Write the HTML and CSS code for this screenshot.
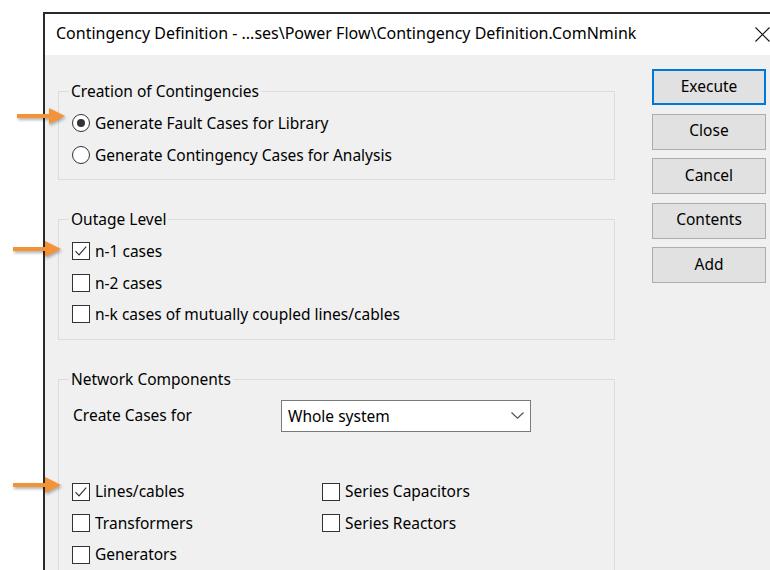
FILE: index.html
```html
<!DOCTYPE html>
<html>
<head>
<meta charset="utf-8">
<title>Contingency Definition</title>
<link rel="stylesheet" href="styles.css">
</head>
<body>
<div class="window">
  <div class="titlebar">
    <span class="title">Contingency Definition - ...ses\Power Flow\Contingency Definition.ComNmink</span>
    <span class="close">
      <svg width="15" height="15" viewBox="0 0 15 15"><path d="M0.5 0.5L14.5 14.5M14.5 0.5L0.5 14.5" stroke="#111" stroke-width="1.1" fill="none"/></svg>
    </span>
  </div>
  <div class="content">
    <div class="main">
      <fieldset class="group g1">
        <legend>Creation of Contingencies</legend>
        <div class="row"><span class="radio on"></span><span>Generate Fault Cases for Library</span></div>
        <div class="row"><span class="radio"></span><span>Generate Contingency Cases for Analysis</span></div>
      </fieldset>

      <fieldset class="group g2">
        <legend>Outage Level</legend>
        <div class="row"><span class="check on"><svg width="16" height="16" viewBox="0 0 16 16"><path d="M2.5 8.2L6 11.8L13.2 3.6" stroke="#333" stroke-width="1.2" fill="none"/></svg></span><span>n-1 cases</span></div>
        <div class="row"><span class="check"></span><span>n-2 cases</span></div>
        <div class="row short"><span class="check"></span><span>n-k cases of mutually coupled lines/cables</span></div>
      </fieldset>

      <fieldset class="group g3">
        <legend>Network Components</legend>
        <div class="create">
          <span class="create-label">Create Cases for</span>
          <div class="select">
            <span>Whole system</span>
            <svg width="13" height="7" viewBox="0 0 13 7"><path d="M0.5 0.5L6.5 6.2L12.5 0.5" stroke="#555" stroke-width="1.2" fill="none"/></svg>
          </div>
        </div>
        <div class="comp-grid">
          <div class="row tight"><span class="check on"><svg width="16" height="16" viewBox="0 0 16 16"><path d="M2.5 8.2L6 11.8L13.2 3.6" stroke="#333" stroke-width="1.2" fill="none"/></svg></span><span>Lines/cables</span></div>
          <div class="row tight"><span class="check"></span><span>Series Capacitors</span></div>
          <div class="row tight"><span class="check"></span><span>Transformers</span></div>
          <div class="row tight"><span class="check"></span><span>Series Reactors</span></div>
          <div class="row tight"><span class="check"></span><span>Generators</span></div>
        </div>
      </fieldset>
    </div>

    <div class="buttons">
      <button class="btn default">Execute</button>
      <button class="btn">Close</button>
      <button class="btn">Cancel</button>
      <button class="btn">Contents</button>
      <button class="btn">Add</button>
    </div>
  </div>
</div>

<!-- callout arrows -->
<svg class="arrow a1" width="48" height="16" viewBox="0 0 48 16"><rect x="0" y="6" width="34" height="4" fill="#f39237"/><polygon points="32,0 48,8 32,16" fill="#f39237"/></svg>
<svg class="arrow a2" width="48" height="16" viewBox="0 0 48 16"><rect x="0" y="6" width="34" height="4" fill="#f39237"/><polygon points="32,0 48,8 32,16" fill="#f39237"/></svg>
<svg class="arrow a3" width="48" height="16" viewBox="0 0 48 16"><rect x="0" y="6" width="34" height="4" fill="#f39237"/><polygon points="32,0 48,8 32,16" fill="#f39237"/></svg>
</body>
</html>
```

FILE: styles.css
```css
html, body {
  margin: 0;
  padding: 0;
}

body {
  position: relative;
  width: 770px;
  height: 570px;
  overflow: hidden;
  background: #fff;
  font-family: "Segoe UI", "Noto Sans", sans-serif;
  color: #000;
}

.window {
  margin: 12px 0 0 43px;
  width: 747px;
  height: 620px;
  border-top: 2px solid #2a2a2a;
  border-left: 2px solid #2a2a2a;
  background: #f0f0f0;
}

.titlebar {
  box-sizing: border-box;
  height: 41px;
  background: #fff;
  display: flex;
  align-items: center;
  padding: 0 0 3px 11px;
}

.title {
  flex: 1;
  font-size: 16px;
  white-space: nowrap;
}

.close {
  width: 60px;
  display: flex;
  justify-content: center;
  align-items: center;
  padding-top: 2px;
}

.content {
  display: flex;
  align-items: flex-start;
  padding: 14px 0 0 13px;
}

.main {
  width: 557px;
}

.group {
  margin: 0;
  padding: 0 0 0 13px;
  border: 1px solid #dcdcdc;
  min-width: 0;
}

.group legend {
  margin-left: -3px;
  padding: 0 2px;
  font-size: 15.5px;
  line-height: 18px;
}

.g1 {
  margin-top: 13px;
  padding-top: 7px;
  padding-bottom: 8px;
}

.g2 {
  margin-top: 30px;
  padding-top: 7px;
  padding-bottom: 10px;
}

.g3 {
  margin-top: 30px;
  padding-top: 12px;
  padding-bottom: 40px;
}

.row {
  display: flex;
  align-items: center;
  gap: 5px;
  height: 32px;
  font-size: 15.5px;
  white-space: nowrap;
}

.row > span:last-child {
  padding-bottom: 1px;
}

.row.short {
  height: 30px;
}

.row.tight {
  height: 31.5px;
}

.radio {
  box-sizing: border-box;
  width: 18px;
  height: 18px;
  border: 1px solid #333;
  border-radius: 50%;
  background: #fff;
  display: flex;
  align-items: center;
  justify-content: center;
}

.radio.on::after {
  content: "";
  width: 8px;
  height: 8px;
  border-radius: 50%;
  background: #333;
}

.check {
  box-sizing: border-box;
  width: 18px;
  height: 18px;
  border: 1px solid #333;
  background: #fff;
  display: flex;
  align-items: center;
  justify-content: center;
}

.create {
  display: grid;
  grid-template-columns: 209px 250px;
  align-items: center;
  height: 32px;
}

.create-label {
  padding: 0 0 3px 1px;
  font-size: 15.5px;
}

.select {
  box-sizing: border-box;
  height: 32px;
  border: 1px solid #7a7a7a;
  background: #fff;
  display: flex;
  align-items: center;
  justify-content: space-between;
  padding: 0 6px 1px 6px;
  font-size: 15.5px;
}

.comp-grid {
  margin-top: 44px;
  display: grid;
  grid-template-columns: 250px 250px;
}

.buttons {
  margin-left: 37px;
  display: flex;
  flex-direction: column;
  gap: 8.5px;
}

.btn {
  box-sizing: border-box;
  width: 114px;
  height: 36px;
  border: 1px solid #adadad;
  background: #e1e1e1;
  font-family: inherit;
  font-size: 15.5px;
  color: #000;
  padding: 0 0 3px 0;
}

.btn.default {
  border: 2px solid #0078d7;
}

.arrow {
  position: absolute;
  filter: drop-shadow(1px 2px 1.5px rgba(0, 0, 0, 0.3));
}

.a1 { left: 17px; top: 108px; }
.a2 { left: 13px; top: 241px; }
.a3 { left: 13px; top: 477px; }
```
